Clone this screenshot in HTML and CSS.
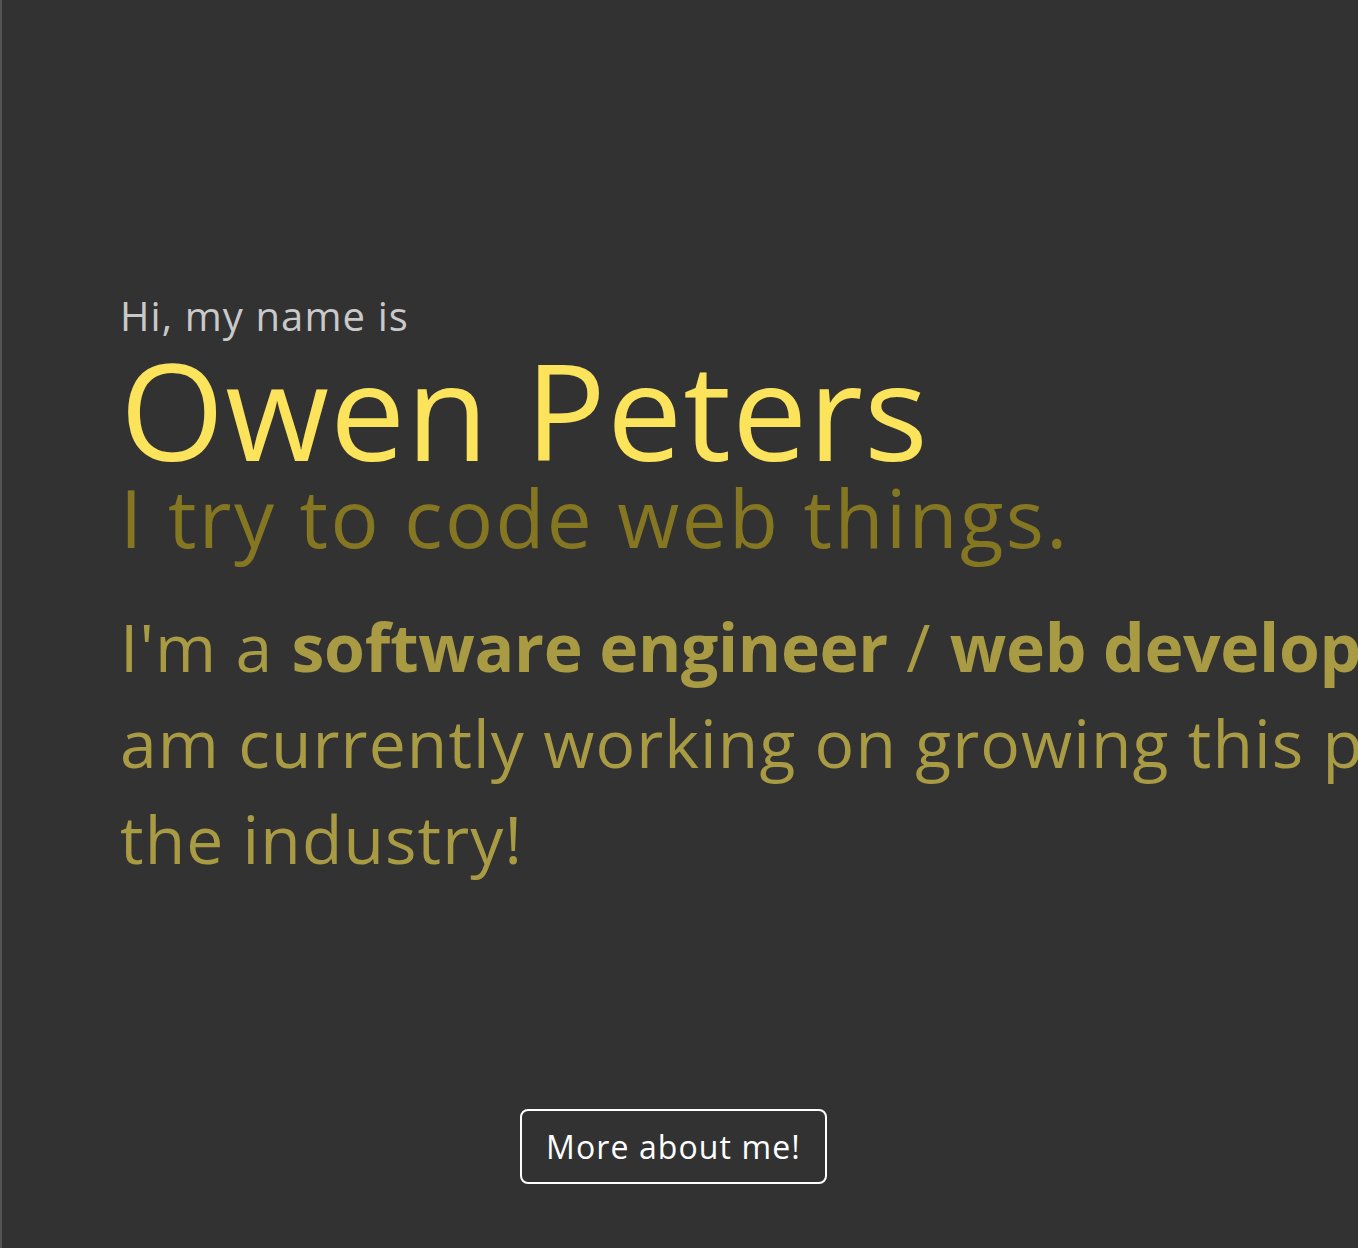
FILE: index.html
```html
<!DOCTYPE html>
<html lang="en">
<head>
<meta charset="utf-8">
<title>Owen Peters</title>
<link rel="stylesheet" href="styles.css">
</head>
<body>
<main class="hero">
  <section class="intro">
    <p class="greeting">Hi, my name is</p>
    <h1 class="name">Owen Peters</h1>
    <h2 class="tagline">I try to code web things.</h2>
    <p class="about">I'm a <strong>software engineer</strong> / <strong>web developer</strong> who<br>am currently working on growing this passion into a career in<br>the industry!</p>
  </section>
  <div class="actions">
    <a class="more-btn" href="#about">More about me!</a>
  </div>
</main>
</body>
</html>
```

FILE: styles.css
```css
html, body {
  margin: 0;
  padding: 0;
  background: #323232;
  overflow: hidden;
}

body {
  width: 1356px;
  height: 1248px;
  border-left: 2px solid #555555;
  font-family: "Open Sans", "Liberation Sans", sans-serif;
}

.hero {
  display: flex;
  flex-direction: column;
  height: 100%;
  padding: 0 0 0 118px;
  box-sizing: border-box;
}

.intro {
  padding-top: 288px;
  white-space: nowrap;
}

.greeting {
  margin: 0;
  font-size: 40px;
  line-height: 56px;
  color: #c9c9c9;
  font-weight: 400;
  letter-spacing: 1.1px;
}

.name {
  margin: 0;
  font-size: 134px;
  line-height: 130px;
  font-weight: 400;
  color: #fbe35c;
  letter-spacing: 1px;
}

.tagline {
  margin: 0;
  font-size: 80px;
  line-height: 86px;
  font-weight: 400;
  color: #857621;
  letter-spacing: 2.4px;
}

.about {
  margin: 38px 0 0;
  font-size: 66px;
  line-height: 96px;
  color: #a99a44;
  letter-spacing: 1.1px;
}

.about strong {
  font-weight: 700;
  letter-spacing: -0.3px;
}

.actions {
  margin-top: auto;
  margin-bottom: 64px;
  display: flex;
  padding-left: 400px;
}

.more-btn {
  display: inline-block;
  padding: 12px 24px;
  border: 2px solid #ffffff;
  border-radius: 8px;
  color: #ffffff;
  font-size: 32px;
  line-height: 47px;
  letter-spacing: 1.1px;
  text-decoration: none;
}
```
